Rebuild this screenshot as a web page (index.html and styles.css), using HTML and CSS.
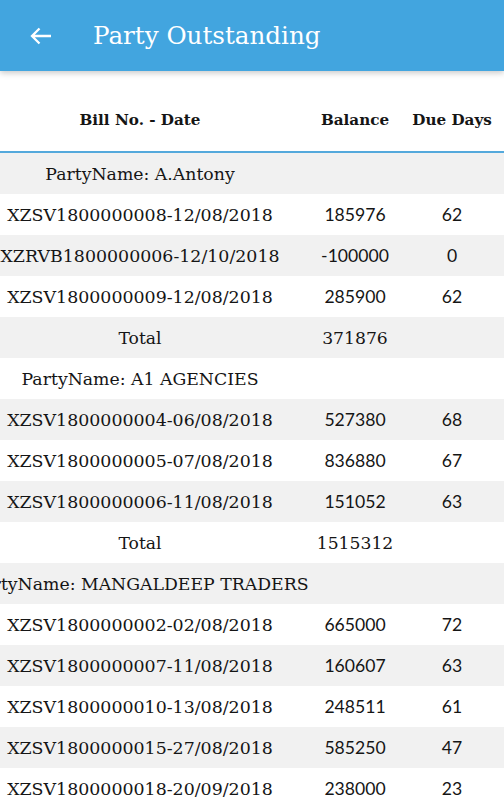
FILE: index.html
```html
<!DOCTYPE html>
<html>
<head>
<meta charset="utf-8">
<link rel="stylesheet" href="styles.css">
</head>
<body>
<header class="appbar">
  <svg class="back" width="24" height="20" viewBox="0 0 24 20"><path d="M22 10H3.5M10.5 2.5L3 10l7.5 7.5" fill="none" stroke="#fff" stroke-width="2.3" stroke-linecap="butt"/></svg>
  <h1 class="title">Party Outstanding</h1>
</header>
<main class="table">
  <div class="head row">
    <div class="cell">Bill No. - Date</div>
    <div class="cell">Balance</div>
    <div class="cell">Due Days</div>
  </div>
  <div class="divider"></div>
  <div class="row party gray"><div class="cell">PartyName: A.Antony</div></div>
  <div class="row"><div class="cell bill">XZSV1800000008-12/08/2018</div><div class="cell num">185976</div><div class="cell num">62</div></div>
  <div class="row gray"><div class="cell bill">XZRVB1800000006-12/10/2018</div><div class="cell num">-100000</div><div class="cell num">0</div></div>
  <div class="row"><div class="cell bill">XZSV1800000009-12/08/2018</div><div class="cell num">285900</div><div class="cell num">62</div></div>
  <div class="row total gray"><div class="cell">Total</div><div class="cell">371876</div><div class="cell"></div></div>
  <div class="row party"><div class="cell">PartyName: A1 AGENCIES</div></div>
  <div class="row gray"><div class="cell bill">XZSV1800000004-06/08/2018</div><div class="cell num">527380</div><div class="cell num">68</div></div>
  <div class="row"><div class="cell bill">XZSV1800000005-07/08/2018</div><div class="cell num">836880</div><div class="cell num">67</div></div>
  <div class="row gray"><div class="cell bill">XZSV1800000006-11/08/2018</div><div class="cell num">151052</div><div class="cell num">63</div></div>
  <div class="row total"><div class="cell">Total</div><div class="cell">1515312</div><div class="cell"></div></div>
  <div class="row party gray"><div class="cell">PartyName: MANGALDEEP TRADERS</div></div>
  <div class="row"><div class="cell bill">XZSV1800000002-02/08/2018</div><div class="cell num">665000</div><div class="cell num">72</div></div>
  <div class="row gray"><div class="cell bill">XZSV1800000007-11/08/2018</div><div class="cell num">160607</div><div class="cell num">63</div></div>
  <div class="row"><div class="cell bill">XZSV1800000010-13/08/2018</div><div class="cell num">248511</div><div class="cell num">61</div></div>
  <div class="row gray"><div class="cell bill">XZSV1800000015-27/08/2018</div><div class="cell num">585250</div><div class="cell num">47</div></div>
  <div class="row"><div class="cell bill">XZSV1800000018-20/09/2018</div><div class="cell num">238000</div><div class="cell num">23</div></div>
</main>
</body>
</html>
```
FILE: styles.css
```css
html, body {
  margin: 0;
  padding: 0;
  background: #fff;
  overflow: hidden;
}
body {
  font-family: "DejaVu Serif", serif;
  color: #151515;
}
.appbar {
  height: 71px;
  background: #42a5df;
  display: flex;
  align-items: center;
  box-shadow: 0 2px 6px rgba(0, 0, 0, 0.22);
  position: relative;
  z-index: 2;
}
.back {
  margin-left: 29px;
  margin-right: 40px;
}
.title {
  margin: 0;
  font-family: "DejaVu Serif", serif;
  font-weight: normal;
  font-size: 24.6px;
  color: #fff;
}
.table {
  display: flex;
  flex-direction: column;
}
.row {
  display: grid;
  grid-template-columns: 280px 150px 44px;
  height: 41px;
  align-items: center;
  background: #fff;
}
.row.gray {
  background: #f1f1f1;
}
.cell {
  display: flex;
  justify-content: center;
  white-space: nowrap;
  font-size: 17.2px;
}
.head {
  height: 80px;
  padding-top: 17px;
  box-sizing: border-box;
}
.head .cell {
  font-weight: bold;
  font-size: 15.2px;
}
.divider {
  height: 2px;
  background: #54a9dc;
}
.bill {
  font-size: 17.4px;
}
.num {
  font-family: "Lato", sans-serif;
  font-size: 17.6px;
}
.party .cell {
  font-size: 17.3px;
}
```
